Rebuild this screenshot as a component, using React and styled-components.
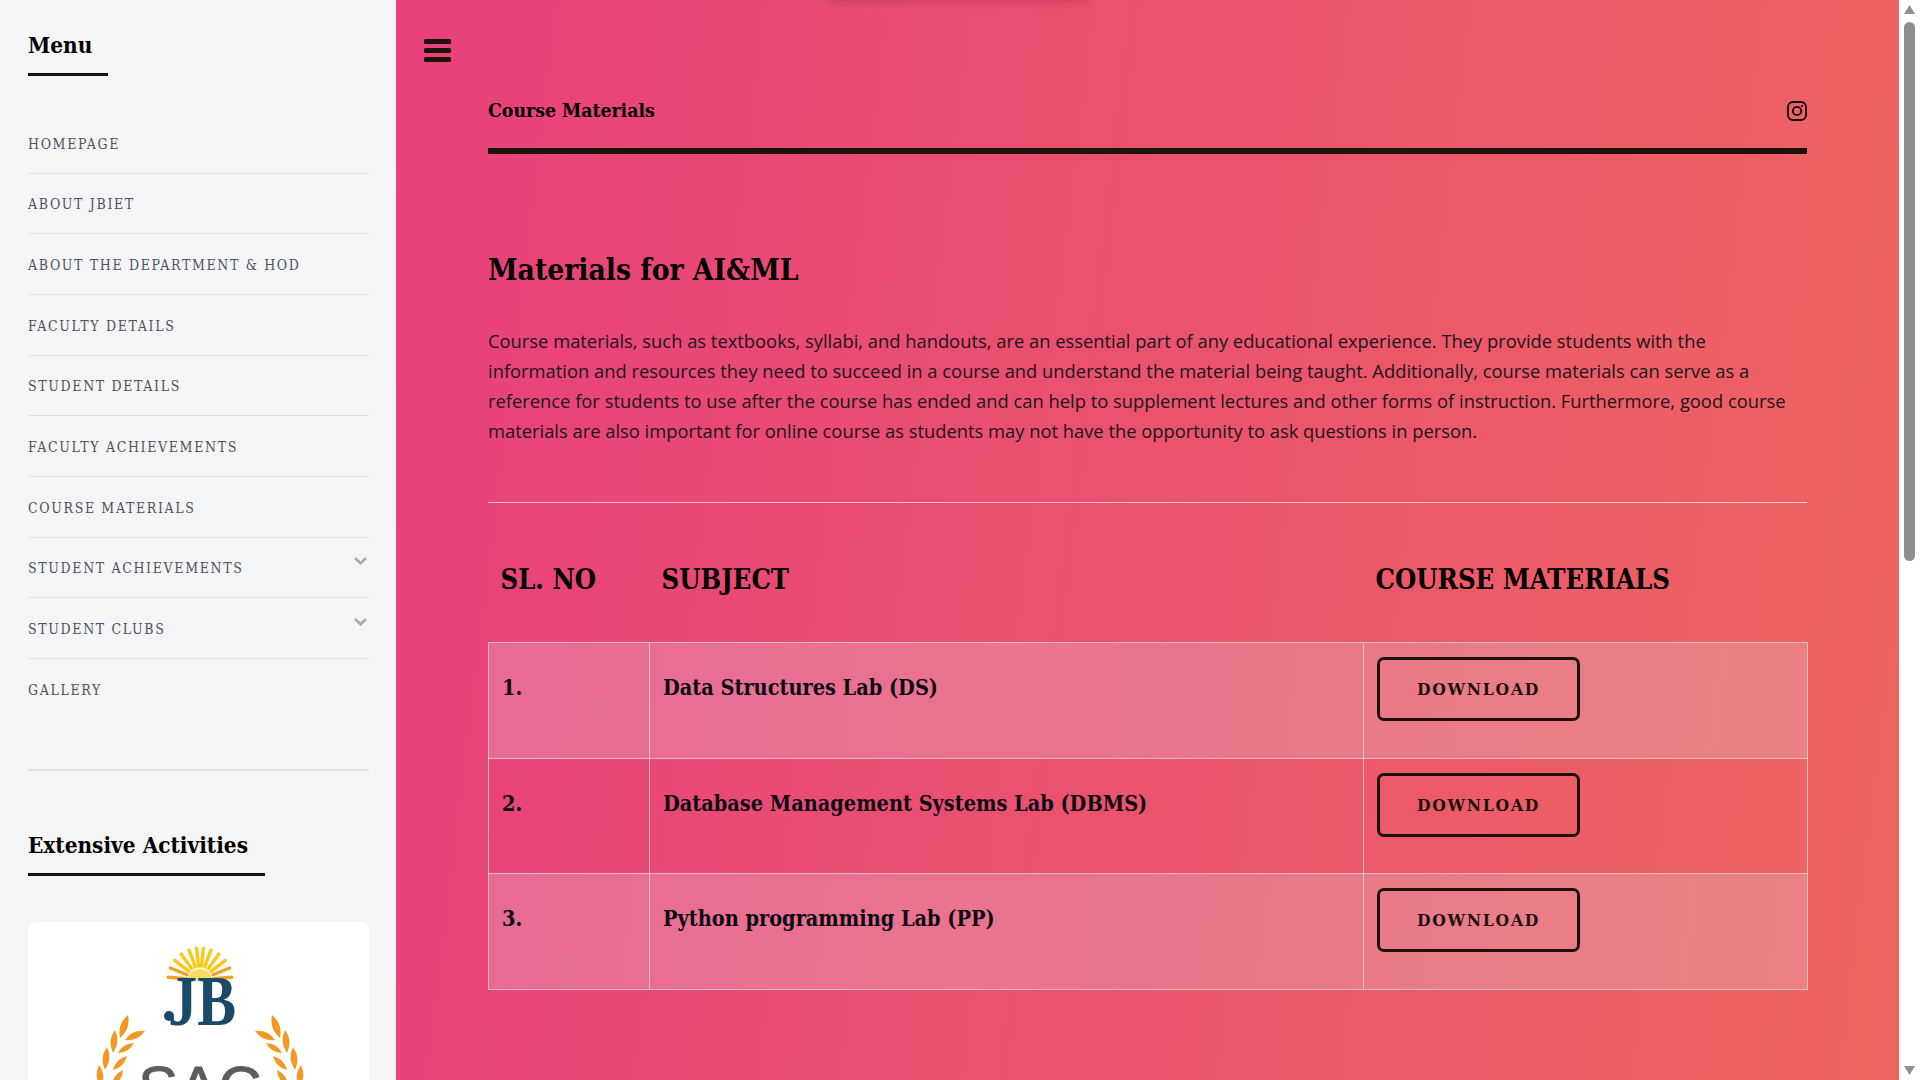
import React from 'react';
import styled, { createGlobalStyle } from 'styled-components';

const slab = '"DejaVu Serif Condensed", "DejaVu Serif", "Liberation Serif", serif';

const GlobalStyle = createGlobalStyle`
  html, body { overflow: hidden; }
  body {
    margin: 0;
    font-family: "Open Sans", sans-serif;
    background: #fff;
  }
`;

const Page = styled.div`
  display: flex;
  height: 1080px;
  overflow: hidden;
`;

const Sidebar = styled.aside`
  flex: 0 0 396px;
  box-sizing: border-box;
  padding: 28px 27px 0 28px;
  background: #f4f5f7;
`;

const SideTitle = styled.h3`
  display: inline-block;
  margin: 0;
  padding-bottom: 11px;
  border-bottom: 3px solid #1a120b;
  width: ${({ $width }) => $width}px;
  font-family: ${slab};
  font-size: 22.4px;
  line-height: 34px;
  font-weight: 700;
  color: #000;
`;

const MenuList = styled.ul`
  list-style: none;
  margin: 37px 0 0;
  padding: 0 0 49px;
  border-bottom: 2px solid #dde2e2;
`;

const MenuItem = styled.li`
  display: flex;
  align-items: center;
  justify-content: space-between;
  box-sizing: border-box;
  height: 60.67px;
  padding-top: 2px;
  border-bottom: 1px solid #dfe1e4;
  font-family: ${slab};
  font-size: 14px;
  letter-spacing: 1.64px;
  color: #50505c;
  &:last-child { border-bottom: 0; }
  svg { margin: 0 2px 14px 0; }
`;

const ActivitiesBlock = styled.section`
  margin-top: 57px;
`;

const LogoCard = styled.div`
  margin-top: 46px;
  height: 341px;
  border-radius: 8px;
  background: #fff;
  overflow: hidden;
`;

const Main = styled.main`
  position: relative;
  flex: 1;
  min-width: 0;
  box-sizing: border-box;
  padding: 39px 92px 0 28px;
  background: linear-gradient(97deg, #e8407c 18%, #ee6560 99%) fixed;
  color: #111;
`;

const TopShadow = styled.div`
  position: absolute;
  top: -8px;
  left: 432px;
  width: 260px;
  height: 8px;
  box-shadow: 0 0 10px rgba(60, 30, 30, 0.28);
`;

const MenuButton = styled.button`
  display: block;
  padding: 0;
  border: 0;
  background: none;
  height: 23px;
  line-height: 0;
`;

const TopBar = styled.div`
  display: flex;
  align-items: center;
  justify-content: space-between;
  margin: 30px 0 0 64px;
  height: 62px;
  box-sizing: border-box;
  padding-bottom: 19px;
  border-bottom: 6px solid #1a120b;
`;

const PageLabel = styled.h5`
  margin: 0;
  font-family: ${slab};
  font-size: 19.3px;
  font-weight: 700;
  color: #000;
`;

const Content = styled.div`
  margin-left: 64px;
`;

const Heading = styled.h2`
  margin: 96px 0 0;
  font-family: ${slab};
  font-size: 29.7px;
  line-height: 40px;
  font-weight: 700;
  color: #000;
`;

const Intro = styled.p`
  margin: 36px 0 0;
  font-size: 18.35px;
  line-height: 30px;
  color: #1c1520;
`;

const Divider = styled.hr`
  margin: 56px 0 0;
  border: 0;
  border-top: 1px solid rgba(230, 225, 225, 0.8);
`;

const Table = styled.table`
  width: 1319px;
  margin-top: 30px;
  border-collapse: collapse;
  table-layout: fixed;
`;

const HeadCell = styled.th`
  height: 92px;
  padding: 0 12px 17px;
  text-align: left;
  font-family: ${slab};
  font-size: 27.2px;
  font-weight: 700;
  color: #000;
  border-bottom: 1px solid rgba(210, 208, 208, 0.85);
`;

const Row = styled.tr`
  background: ${({ $striped }) => ($striped ? 'rgba(232, 232, 238, 0.24)' : 'transparent')};
`;

const Cell = styled.td`
  height: 115.5px;
  box-sizing: border-box;
  padding: ${({ $pad }) => $pad}px 13px 0;
  vertical-align: top;
  border: 1px solid rgba(210, 208, 208, 0.85);
  font-family: ${slab};
  font-size: 21.5px;
  line-height: 34px;
  font-weight: 700;
  color: #0c0a14;
`;

const DownloadButton = styled.a`
  display: flex;
  align-items: center;
  justify-content: center;
  box-sizing: border-box;
  width: 203px;
  height: 64px;
  border: 3px solid #1a120b;
  border-radius: 7px;
  font-family: ${slab};
  font-size: 17.4px;
  font-weight: 700;
  letter-spacing: 1.7px;
  color: #1a120b;
`;

const ScrollGutter = styled.div`
  flex: 0 0 21px;
  display: flex;
  flex-direction: column;
  align-items: center;
  box-sizing: border-box;
  padding: 5px 0;
  background: #fff;
`;

const ScrollThumb = styled.div`
  width: 11px;
  height: 539px;
  margin-top: 8px;
  border-radius: 6px;
  background: #8e8e8e;
`;

const ScrollEnd = styled.svg`
  margin-top: ${({ $bottom }) => ($bottom ? 'auto' : '0')};
`;

const Bars = () => (
  <svg width="27" height="23" viewBox="0 0 27 23" fill="#1a120b">
    <rect width="27" height="5" rx="1.5" />
    <rect y="9" width="27" height="5" rx="1.5" />
    <rect y="18" width="27" height="5" rx="1.5" />
  </svg>
);

const InstagramIcon = () => (
  <svg width="20" height="20" viewBox="0 0 20 20" fill="none" stroke="#0d0a12" strokeWidth="1.8">
    <rect x="1" y="1" width="18" height="18" rx="5" />
    <circle cx="10" cy="10" r="4.2" />
    <circle cx="15" cy="5" r="1" fill="#0d0a12" stroke="none" />
  </svg>
);

const Chevron = () => (
  <svg width="13" height="8" viewBox="0 0 13 8" fill="none" stroke="#a6a6ac" strokeWidth="2.6">
    <path d="M1 1l5.5 5.2L12 1" />
  </svg>
);

// one laurel leaf between two points, bulged on both sides
const Leaf = ({ x1, y1, x2, y2 }) => {
  const mx = (x1 + x2) / 2;
  const my = (y1 + y2) / 2;
  const nx = (y2 - y1) * 0.3;
  const ny = (x1 - x2) * 0.3;
  return (
    <path
      d={`M${x1} ${y1}Q${mx + nx} ${my + ny} ${x2} ${y2}Q${mx - nx} ${my - ny} ${x1} ${y1}z`}
      fill="#f09a26"
    />
  );
};

const leaves = [
  [92, 116, 100, 93],
  [97, 118, 117, 109],
  [85, 131, 87, 108],
  [90, 131, 106, 121],
  [77, 148, 79, 125],
  [85, 148, 99, 134],
  [73, 165, 71, 143],
  [84, 164, 95, 148],
  [78, 186, 70, 165],
  [92, 180, 100, 164],
];

const rays = [-85, -68, -52, -36, -20, -6, 6, 20, 36, 52, 68, 85];

const LogoArt = () => (
  <svg width="341" height="341" viewBox="0 0 341 341">
    {rays.map((a) => {
      const r = (a * Math.PI) / 180;
      return (
        <line
          key={a}
          x1={172 + Math.sin(r) * 14}
          y1={58 - Math.cos(r) * 14}
          x2={172 + Math.sin(r) * 32}
          y2={58 - Math.cos(r) * 32}
          stroke={Math.abs(a) > 60 ? '#f3a31f' : '#f8c91d'}
          strokeWidth="3.4"
          strokeLinecap="round"
        />
      );
    })}
    <path d="M160 58a12 11 0 0 1 24 0z" fill="#fbdc62" />
    <line x1="150" y1="59" x2="194" y2="59" stroke="#c9d4da" strokeWidth="1" />
    <text
      x="140"
      y="103"
      textLength="68"
      lengthAdjust="spacingAndGlyphs"
      fontFamily="Liberation Serif, serif"
      fontSize="72"
      fontWeight="700"
      fill="#1a4a66"
    >
      JB
    </text>
    <circle cx="141" cy="94" r="5" fill="#1a4a66" />
    {leaves.map(([x1, y1, x2, y2]) => (
      <g key={`${x1}-${y1}`}>
        <Leaf x1={x1} y1={y1} x2={x2} y2={y2} />
        <Leaf x1={344 - x1} y1={y1} x2={344 - x2} y2={y2} />
      </g>
    ))}
    <text
      x="172"
      y="186"
      textAnchor="middle"
      fontFamily="Liberation Sans, sans-serif"
      fontSize="60"
      fill="#5c5c5c"
      stroke="#5c5c5c"
      strokeWidth="1"
    >
      SAC
    </text>
  </svg>
);

const menuItems = [
  { label: 'HOMEPAGE' },
  { label: 'ABOUT JBIET' },
  { label: 'ABOUT THE DEPARTMENT & HOD' },
  { label: 'FACULTY DETAILS' },
  { label: 'STUDENT DETAILS' },
  { label: 'FACULTY ACHIEVEMENTS' },
  { label: 'COURSE MATERIALS' },
  { label: 'STUDENT ACHIEVEMENTS', more: true },
  { label: 'STUDENT CLUBS', more: true },
  { label: 'GALLERY' },
];

const subjects = ['Data Structures Lab (DS)', 'Database Management Systems Lab (DBMS)', 'Python programming Lab (PP)'];

const App = () => {
  return (
    <>
      <GlobalStyle />
      <Page>
        <Sidebar>
          <SideTitle $width={80}>Menu</SideTitle>
          <MenuList>
            {menuItems.map((item) => (
              <MenuItem key={item.label}>
                {item.label}
                {item.more && <Chevron />}
              </MenuItem>
            ))}
          </MenuList>
          <ActivitiesBlock>
            <SideTitle $width={237}>Extensive Activities</SideTitle>
            <LogoCard>
              <LogoArt />
            </LogoCard>
          </ActivitiesBlock>
        </Sidebar>
        <Main>
          <TopShadow />
          <MenuButton aria-label="menu">
            <Bars />
          </MenuButton>
          <TopBar>
            <PageLabel>Course Materials</PageLabel>
            <InstagramIcon />
          </TopBar>
          <Content>
            <Heading>Materials for AI&amp;ML</Heading>
            <Intro>
              Course materials, such as textbooks, syllabi, and handouts, are an essential part of any educational
              experience. They provide students with the information and resources they need to succeed in a course and
              understand the material being taught. Additionally, course materials can serve as a reference for students
              to use after the course has ended and can help to supplement lectures and other forms of instruction.
              Furthermore, good course materials are also important for online course as students may not have the
              opportunity to ask questions in person.
            </Intro>
            <Divider />
            <Table>
              <colgroup>
                <col width="161" />
                <col width="714" />
                <col width="444" />
              </colgroup>
              <thead>
                <tr>
                  <HeadCell>SL. NO</HeadCell>
                  <HeadCell>SUBJECT</HeadCell>
                  <HeadCell>COURSE MATERIALS</HeadCell>
                </tr>
              </thead>
              <tbody>
                {subjects.map((name, i) => (
                  <Row key={name} $striped={i % 2 === 0}>
                    <Cell $pad={28}>{i + 1}.</Cell>
                    <Cell $pad={28}>{name}</Cell>
                    <Cell $pad={14}>
                      <DownloadButton>DOWNLOAD</DownloadButton>
                    </Cell>
                  </Row>
                ))}
              </tbody>
            </Table>
          </Content>
        </Main>
        <ScrollGutter>
          <ScrollEnd width="11" height="9" viewBox="0 0 11 9">
            <path d="M5.5 0L11 9H0z" fill="#909090" />
          </ScrollEnd>
          <ScrollThumb />
          <ScrollEnd $bottom width="11" height="9" viewBox="0 0 11 9">
            <path d="M0 0H11L5.5 9z" fill="#909090" />
          </ScrollEnd>
        </ScrollGutter>
      </Page>
    </>
  );
};

export default App;
